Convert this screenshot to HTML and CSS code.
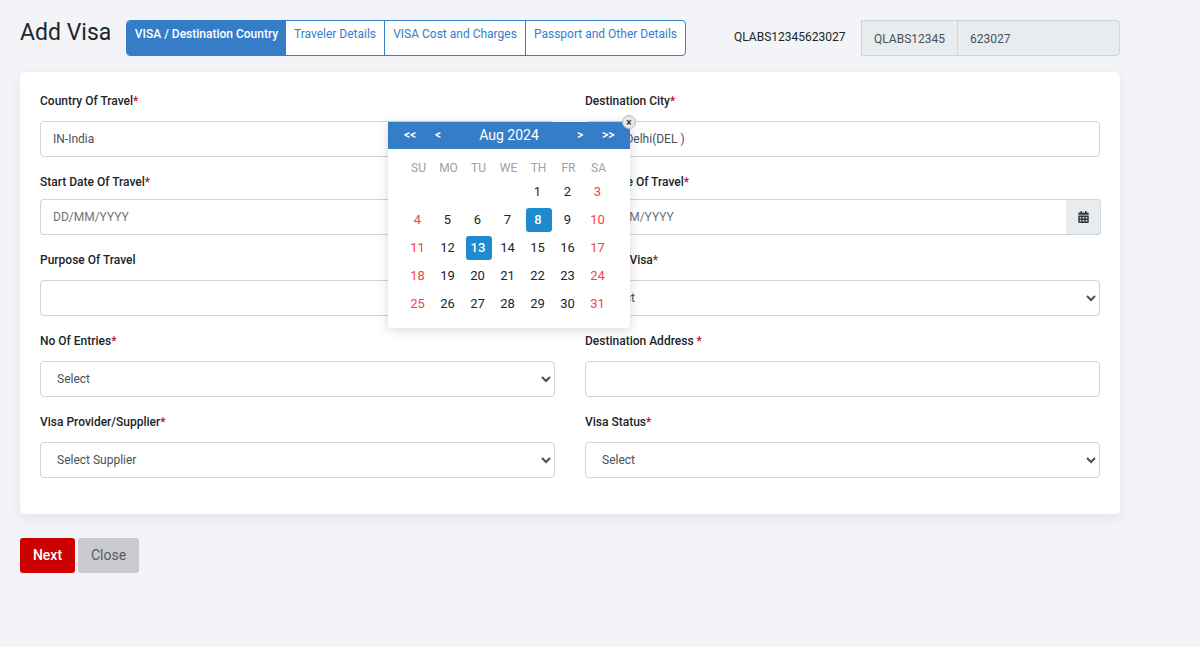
FILE: index.html
```html
<!DOCTYPE html>
<html lang="en">
<head>
<meta charset="UTF-8">
<title>Add Visa</title>
<link rel="stylesheet" href="styles.css">
</head>
<body>

<div class="page">
  <div class="top-bar">
    <h2 class="page-title">Add Visa</h2>
    <div class="tabs">
      <a class="tab tab-active">VISA / Destination Country</a>
      <a class="tab tab-traveler">Traveler Details</a>
      <a class="tab tab-cost">VISA Cost and Charges</a>
      <a class="tab tab-passport">Passport and Other Details</a>
    </div>
    <span class="ref-label">QLABS12345623027</span>
    <div class="ref-group">
      <span class="ref-cell ref-first">QLABS12345</span>
      <span class="ref-cell ref-second">623027</span>
    </div>
  </div>

  <div class="card">
    <div class="form-grid">
      <div class="field">
        <label>Country Of Travel<span class="req">*</span></label>
        <input class="control" type="text" value="IN-India">
      </div>
      <div class="field">
        <label>Destination City<span class="req">*</span></label>
        <input class="control" type="text" value="DEL -Delhi(DEL )">
      </div>

      <div class="field field-date">
        <label>Start Date Of Travel<span class="req">*</span></label>
        <div class="input-group">
          <input class="control" type="text" placeholder="DD/MM/YYYY">
          <span class="addon">
            <svg width="11" height="12" viewBox="0 0 448 512"><path fill="#343a40" d="M0 464c0 26.500 21.500 48 48 48h352c26.500 0 48-21.500 48-48V192H0v272zm320-196c0-6.600 5.400-12 12-12h40c6.600 0 12 5.400 12 12v40c0 6.600-5.400 12-12 12h-40c-6.600 0-12-5.400-12-12v-40zm0 128c0-6.600 5.400-12 12-12h40c6.600 0 12 5.400 12 12v40c0 6.600-5.400 12-12 12h-40c-6.600 0-12-5.400-12-12v-40zM192 268c0-6.600 5.400-12 12-12h40c6.600 0 12 5.400 12 12v40c0 6.600-5.400 12-12 12h-40c-6.600 0-12-5.400-12-12v-40zm0 128c0-6.600 5.400-12 12-12h40c6.600 0 12 5.400 12 12v40c0 6.600-5.400 12-12 12h-40c-6.600 0-12-5.400-12-12v-40zM64 268c0-6.600 5.400-12 12-12h40c6.600 0 12 5.400 12 12v40c0 6.600-5.400 12-12 12H76c-6.600 0-12-5.400-12-12v-40zm0 128c0-6.600 5.400-12 12-12h40c6.600 0 12 5.400 12 12v40c0 6.600-5.400 12-12 12H76c-6.600 0-12-5.400-12-12v-40zM400 64h-48V16c0-8.800-7.200-16-16-16h-32c-8.800 0-16 7.200-16 16v48H160V16c0-8.800-7.200-16-16-16h-32c-8.800 0-16 7.200-16 16v48H48C21.500 64 0 85.500 0 112v48h448v-48c0-26.500-21.500-48-48-48z"/></svg>
          </span>
        </div>
      </div>
      <div class="field field-date">
        <label>End Date Of Travel<span class="req">*</span></label>
        <div class="input-group">
          <input class="control" type="text" placeholder="DD/MM/YYYY">
          <span class="addon">
            <svg width="11" height="12" viewBox="0 0 448 512"><path fill="#343a40" d="M0 464c0 26.500 21.500 48 48 48h352c26.500 0 48-21.500 48-48V192H0v272zm320-196c0-6.600 5.400-12 12-12h40c6.600 0 12 5.400 12 12v40c0 6.600-5.400 12-12 12h-40c-6.600 0-12-5.400-12-12v-40zm0 128c0-6.600 5.400-12 12-12h40c6.600 0 12 5.400 12 12v40c0 6.600-5.400 12-12 12h-40c-6.600 0-12-5.400-12-12v-40zM192 268c0-6.600 5.400-12 12-12h40c6.600 0 12 5.400 12 12v40c0 6.600-5.400 12-12 12h-40c-6.600 0-12-5.400-12-12v-40zm0 128c0-6.600 5.400-12 12-12h40c6.600 0 12 5.400 12 12v40c0 6.600-5.400 12-12 12h-40c-6.600 0-12-5.400-12-12v-40zM64 268c0-6.600 5.400-12 12-12h40c6.600 0 12 5.400 12 12v40c0 6.600-5.400 12-12 12H76c-6.600 0-12-5.400-12-12v-40zm0 128c0-6.600 5.400-12 12-12h40c6.600 0 12 5.400 12 12v40c0 6.600-5.400 12-12 12H76c-6.600 0-12-5.400-12-12v-40zM400 64h-48V16c0-8.800-7.200-16-16-16h-32c-8.800 0-16 7.200-16 16v48H160V16c0-8.800-7.200-16-16-16h-32c-8.800 0-16 7.200-16 16v48H48C21.500 64 0 85.500 0 112v48h448v-48c0-26.500-21.500-48-48-48z"/></svg>
          </span>
        </div>
      </div>

      <div class="field">
        <label>Purpose Of Travel</label>
        <input class="control" type="text">
      </div>
      <div class="field">
        <label>Type Of Visa<span class="req">*</span></label>
        <select class="control"><option>Select</option></select>
      </div>

      <div class="field">
        <label>No Of Entries<span class="req">*</span></label>
        <select class="control"><option>Select</option></select>
      </div>
      <div class="field">
        <label>Destination Address <span class="req">*</span></label>
        <input class="control" type="text">
      </div>

      <div class="field">
        <label>Visa Provider/Supplier<span class="req">*</span></label>
        <select class="control"><option>Select Supplier</option></select>
      </div>
      <div class="field">
        <label>Visa Status<span class="req">*</span></label>
        <select class="control"><option>Select</option></select>
      </div>
    </div>
  </div>

  <div class="actions">
    <button class="btn btn-next">Next</button>
    <button class="btn btn-close">Close</button>
  </div>
</div>

<div class="calendar">
  <div class="cal-head">
    <span class="cal-nav nav-first">&lt;&lt;</span>
    <span class="cal-nav nav-prev">&lt;</span>
    <span class="cal-month">Aug 2024</span>
    <span class="cal-nav nav-next">&gt;</span>
    <span class="cal-nav nav-last">&gt;&gt;</span>
  </div>
  <div class="cal-grid">
    <span class="dow">SU</span><span class="dow">MO</span><span class="dow">TU</span><span class="dow">WE</span><span class="dow">TH</span><span class="dow">FR</span><span class="dow">SA</span>

    <span class="day"></span><span class="day"></span><span class="day"></span><span class="day"></span><span class="day">1</span><span class="day">2</span><span class="day off">3</span>
    <span class="day off">4</span><span class="day">5</span><span class="day">6</span><span class="day">7</span><span class="day picked">8</span><span class="day">9</span><span class="day off">10</span>
    <span class="day off">11</span><span class="day">12</span><span class="day picked">13</span><span class="day">14</span><span class="day">15</span><span class="day">16</span><span class="day off">17</span>
    <span class="day off">18</span><span class="day">19</span><span class="day">20</span><span class="day">21</span><span class="day">22</span><span class="day">23</span><span class="day off">24</span>
    <span class="day off">25</span><span class="day">26</span><span class="day">27</span><span class="day">28</span><span class="day">29</span><span class="day">30</span><span class="day off">31</span>
  </div>
  <button class="cal-close">&#215;</button>
</div>

</body>
</html>
```

FILE: styles.css
```css
* {
  box-sizing: border-box;
}
body {
  font-family: 'Roboto', 'Liberation Sans', sans-serif;
  font-size: 12px;
  background-color: #f2f4f8;
  margin: 0;
  color: #212529;
}
.page {
  width: 1120px;
  padding: 20px 0 0 20px;
}
.top-bar {
  display: flex;
  height: 36px;
}
.page-title {
  margin: 0;
  width: 106px;
  font-size: 23px;
  font-weight: 400;
  line-height: 26px;
  color: #212529;
}
.tabs {
  display: flex;
  width: 560px;
  height: 36px;
  border: 1px solid #357ec7;
  border-radius: 4px;
  overflow: hidden;
  background-color: #fff;
}
.tab {
  padding: 5px 0 0;
  height: 34px;
  line-height: 16px;
  text-align: center;
  color: #357ec7;
  border-right: 1px solid #357ec7;
}
.tab-active {
  width: 159px;
  border-right: none;
  background-color: #357ec7;
  color: #fff;
  font-weight: 500;
}
.tab-traveler {
  width: 99px;
}
.tab-cost {
  width: 141px;
}
.tab-passport {
  width: 159px;
  border-right: none;
}
.ref-label {
  margin-left: 48px;
  width: 127px;
  line-height: 34px;
  color: #212529;
}
.ref-group {
  display: flex;
  width: 259px;
  height: 36px;
  background-color: #e9ecef;
  border: 1px solid #ced4da;
  border-radius: 0 4px 4px 0;
  color: #495057;
}
.ref-cell {
  line-height: 36px;
  padding-left: 12px;
}
.ref-first {
  width: 96px;
  border-right: 1px solid #ced4da;
}
.card {
  margin-top: 16px;
  width: 1100px;
  height: 442px;
  padding: 20px;
  background-color: #fff;
  border-radius: 5px;
  box-shadow: 0 4px 14px rgba(0, 0, 0, 0.07);
}
.form-grid {
  display: grid;
  grid-template-columns: 515px 515px;
  column-gap: 30px;
  row-gap: 16px;
}
.field label {
  display: block;
  height: 29px;
  line-height: 18px;
  font-weight: 500;
  color: #212529;
}
.field-date label {
  height: 26px;
}
.req {
  color: #c8102e;
}
.control {
  display: block;
  width: 100%;
  height: 36px;
  padding: 0 12px;
  font-family: inherit;
  font-size: 12px;
  color: #495057;
  background-color: #fff;
  border: 1px solid #ced4da;
  border-radius: 4px;
}
.control::placeholder {
  color: #6c757d;
}
.input-group {
  display: flex;
  width: 516px;
}
.input-group .control {
  flex: 1;
  border-radius: 4px 0 0 4px;
  border-right: none;
}
.addon {
  display: flex;
  align-items: center;
  justify-content: center;
  width: 35px;
  height: 36px;
  background-color: #e9ecef;
  border: 1px solid #ced4da;
  border-left: none;
  border-radius: 0 4px 4px 0;
}
.actions {
  display: flex;
  gap: 3px;
  margin-top: 24px;
}
.btn {
  height: 35px;
  padding: 0 0 2px;
  border: none;
  border-radius: 3px;
  font-family: inherit;
  font-size: 14px;
}
.btn-next {
  width: 55px;
  background-color: #cc0000;
  color: #fff;
  font-weight: 500;
}
.btn-close {
  width: 61px;
  background-color: #c9cbd0;
  color: #555a61;
}

/* date picker popup */
.calendar {
  position: absolute;
  left: 388px;
  top: 122px;
  width: 242px;
  height: 206px;
  background-color: #fff;
  border-radius: 0 0 4px 4px;
  box-shadow: 0 2px 12px rgba(0, 0, 0, 0.16);
}
.cal-close {
  position: absolute;
  right: -6px;
  top: -7px;
  width: 14px;
  height: 14px;
  padding: 0;
  border: 1px solid #bbb;
  border-radius: 50%;
  background-color: #e8e8e8;
  color: #333;
  font-family: inherit;
  font-size: 10px;
  font-weight: 700;
  line-height: 11px;
}
.cal-head {
  position: relative;
  height: 27px;
  background-color: #357ec7;
  color: #fff;
  line-height: 27px;
  text-align: center;
}
.cal-month {
  font-size: 14px;
  font-weight: 400;
}
.cal-nav {
  position: absolute;
  top: 0;
  font-size: 12px;
  font-weight: 500;
}
.nav-first {
  left: 16px;
}
.nav-prev {
  left: 47px;
}
.nav-next {
  left: 189px;
}
.nav-last {
  left: 214px;
}
.cal-grid {
  display: grid;
  grid-template-columns: repeat(7, 30px);
  grid-template-rows: 18px repeat(5, 28px);
  padding: 10px 0 0 15px;
}
.dow,
.day {
  display: flex;
  align-items: center;
  justify-content: center;
  justify-self: center;
  align-self: center;
}
.dow {
  padding-left: 1px;
  font-size: 12px;
  color: #a0a0a0;
}
.day {
  width: 26px;
  height: 24px;
  padding-right: 1px;
  font-size: 13px;
  color: #212529;
}
.off {
  color: #f2453d;
}
.picked {
  margin: 2px 0 0 2px;
  padding: 0 2px 2px 0;
  background-color: #1e8bd0;
  border-radius: 3px;
  color: #fff;
  font-weight: 500;
}
```
